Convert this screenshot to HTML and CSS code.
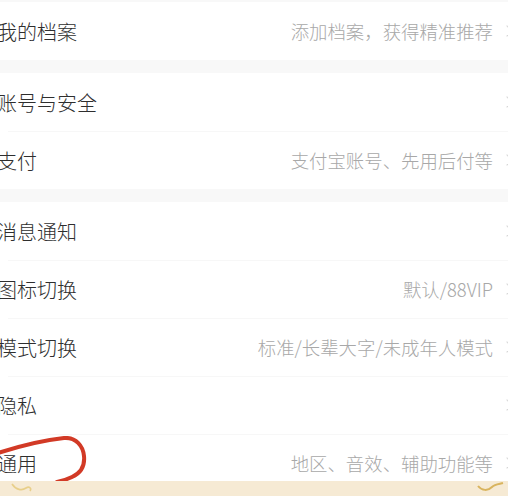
FILE: index.html
```html
<!doctype html>
<html lang="zh">
    <head>
        <meta charset="utf-8">
        <title>设置</title>
        <meta name="viewport" content="width=device-width, initial-scale=1">
        <link rel="stylesheet" href="styles.css">
    </head>
    <body>
        <div class="page">
            <div class="group">
                <div class="row">
                    <div class="label">我的档案</div>
                    <div class="value">添加档案，获得精准推荐</div>
                    <div class="arrow"></div>
                </div>
            </div>

            <div class="group">
                <div class="row">
                    <div class="label">账号与安全</div>
                    <div class="value"></div>
                    <div class="arrow"></div>
                </div>
                <div class="row">
                    <div class="label">支付</div>
                    <div class="value">支付宝账号、先用后付等</div>
                    <div class="arrow"></div>
                </div>
            </div>

            <div class="group">
                <div class="row">
                    <div class="label">消息通知</div>
                    <div class="value"></div>
                    <div class="arrow"></div>
                </div>
                <div class="row">
                    <div class="label">图标切换</div>
                    <div class="value">默认/88VIP</div>
                    <div class="arrow"></div>
                </div>
                <div class="row">
                    <div class="label">模式切换</div>
                    <div class="value">标准/长辈大字/未成年人模式</div>
                    <div class="arrow"></div>
                </div>
                <div class="row">
                    <div class="label">隐私</div>
                    <div class="value"></div>
                    <div class="arrow"></div>
                </div>
                <div class="row">
                    <div class="label">通用</div>
                    <div class="value">地区、音效、辅助功能等</div>
                    <div class="arrow"></div>
                </div>
            </div>
        </div>

        <!-- hand drawn mark around 通用 -->
        <svg class="mark" width="100" height="60" viewBox="0 0 100 60">
            <path d="M-2 17 C 20 10, 45 4, 64 2 C 76 1, 83 10, 84 20 C 85 30, 81 37, 72 41 C 66 44, 62 45, 57 46" fill="none" stroke="#d23a26" stroke-width="4" stroke-linecap="round"/>
        </svg>

        <div class="tabbar">
            <svg class="swirl left" width="24" height="12" viewBox="0 0 24 12">
                <path d="M2 2 C 6 8, 12 9, 16 6 C 19 4, 22 6, 20 9" fill="none" stroke="#e8cf8a" stroke-width="1.6"/>
            </svg>
            <svg class="swirl right" width="28" height="12" viewBox="0 0 28 12">
                <path d="M2 4 C 6 9, 12 9, 16 5 C 19 2, 24 2, 27 1" fill="none" stroke="#d9b45e" stroke-width="2"/>
            </svg>
        </div>
    </body>
</html>
```

FILE: styles.css
```css
body {
    margin: 0;
    background-color: #f8f8f8;
    font-family: "Noto Sans CJK SC", "Noto Sans", sans-serif;
    overflow: hidden;
}

.page {
    padding-top: 2px;
    display: flex;
    flex-direction: column;
    gap: 13px;
}

.group {
    background-color: #fff;
}

.row {
    display: flex;
    align-items: center;
    height: 58px;
    position: relative;
}

.row + .row::before {
    content: "";
    position: absolute;
    top: 0;
    left: 8px;
    right: 0;
    height: 1px;
    background-color: #f7f7f7;
}

.label {
    margin-left: -3px;
    font-size: 20px;
    font-weight: 300;
    color: #2e2e2e;
    white-space: nowrap;
}

.value {
    margin-left: auto;
    font-size: 18.4px;
    font-weight: 300;
    color: #a8a8a8;
    white-space: nowrap;
}

.arrow {
    flex: none;
    width: 7px;
    height: 7px;
    margin-left: 10px;
    margin-right: -3px;
    border-top: 1.5px solid #d4d4d4;
    border-right: 1.5px solid #d4d4d4;
    transform: rotate(45deg);
}

.mark {
    position: absolute;
    left: 0;
    top: 436px;
}

.tabbar {
    position: fixed;
    left: 0;
    right: 0;
    bottom: 0;
    height: 15px;
    background-color: #f6ead4;
}

.swirl {
    position: absolute;
    top: 1px;
}

.swirl.left {
    left: 10px;
}

.swirl.right {
    right: 4px;
}
```
